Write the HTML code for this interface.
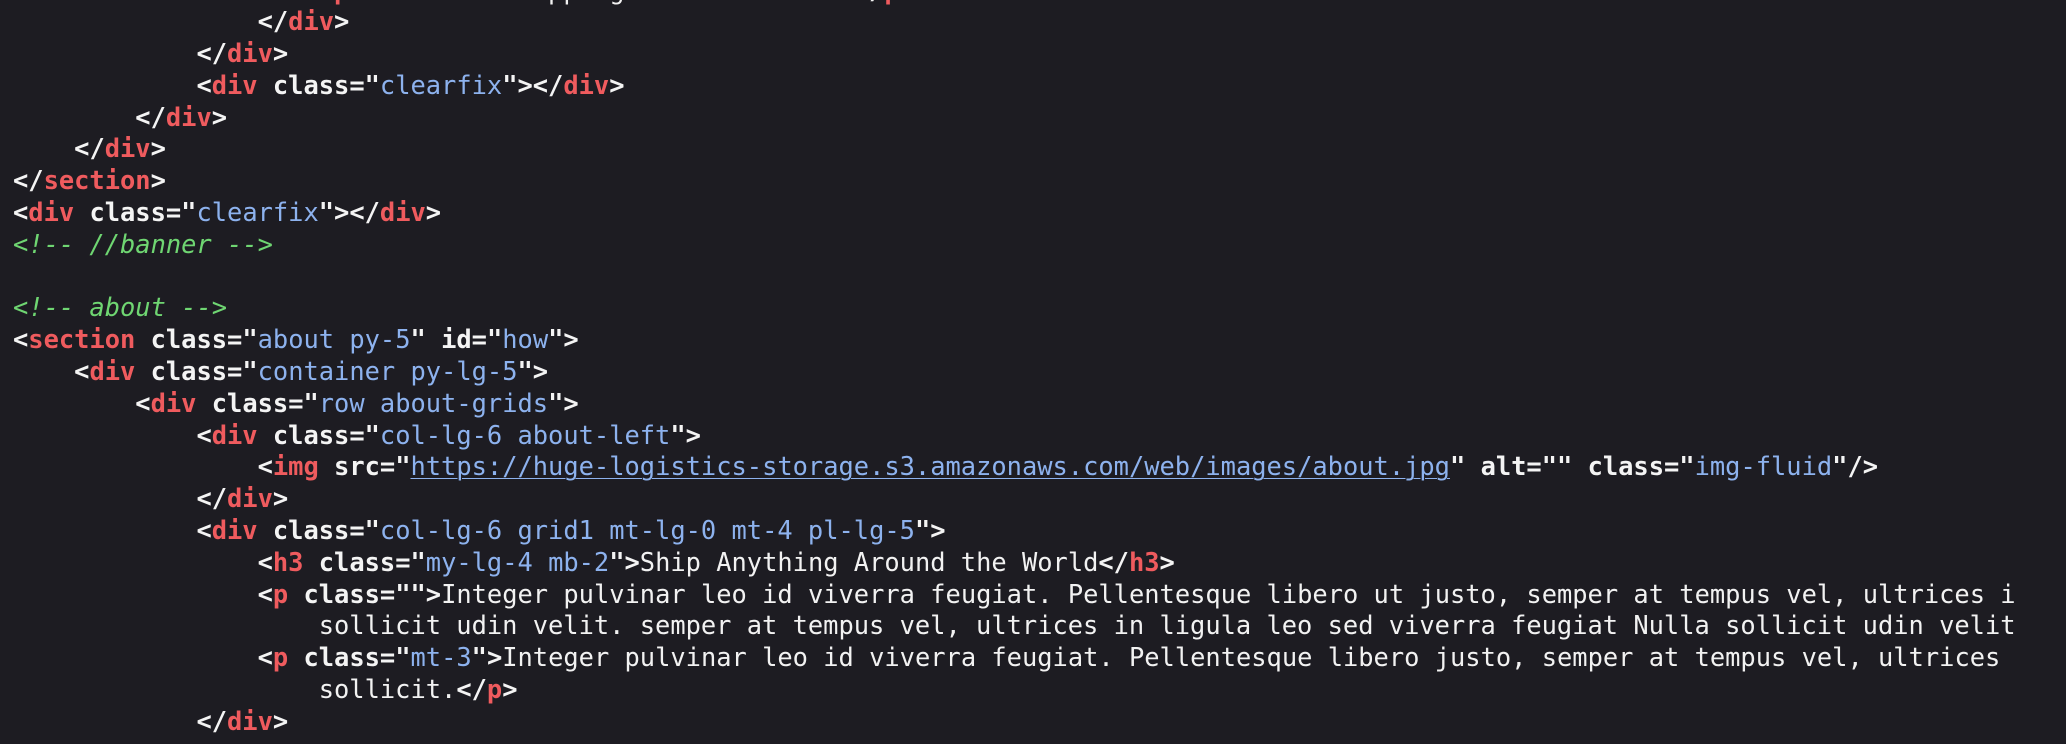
<!DOCTYPE html>
<html><head><meta charset="utf-8">
<style>
html,body{margin:0;padding:0;background:#1d1c22;width:2066px;height:744px;overflow:hidden;}
pre{position:absolute;left:13px;top:-25.5px;width:2053px;overflow:hidden;margin:0;font-family:"DejaVu Sans Mono","Liberation Mono",monospace;font-size:25.4px;line-height:31.8px;color:#f2f2f2;white-space:pre;}
.p{font-weight:bold;color:#f4f4f4}
.t{font-weight:bold;color:#ef5b5e}
.a{font-weight:bold;color:#f4f4f4}
.v{color:#8db2ee}
.u{color:#8db2ee;text-decoration:underline;text-underline-offset:3px;text-decoration-thickness:1px}
.c{color:#6fd672;font-style:italic}
</style></head><body>
<pre>                    <span class="p">&lt;</span><span class="t">p</span><span class="p">&gt;</span>Fast and shipping to all markets<span class="p">&lt;/</span><span class="t">p</span><span class="p">&gt;</span>
                <span class="p">&lt;/</span><span class="t">div</span><span class="p">&gt;</span>
            <span class="p">&lt;/</span><span class="t">div</span><span class="p">&gt;</span>
            <span class="p">&lt;</span><span class="t">div</span> <span class="a">class</span><span class="p">="</span><span class="v">clearfix</span><span class="p">"&gt;&lt;/</span><span class="t">div</span><span class="p">&gt;</span>
        <span class="p">&lt;/</span><span class="t">div</span><span class="p">&gt;</span>
    <span class="p">&lt;/</span><span class="t">div</span><span class="p">&gt;</span>
<span class="p">&lt;/</span><span class="t">section</span><span class="p">&gt;</span>
<span class="p">&lt;</span><span class="t">div</span> <span class="a">class</span><span class="p">="</span><span class="v">clearfix</span><span class="p">"&gt;&lt;/</span><span class="t">div</span><span class="p">&gt;</span>
<span class="c">&lt;!-- //banner --&gt;</span>

<span class="c">&lt;!-- about --&gt;</span>
<span class="p">&lt;</span><span class="t">section</span> <span class="a">class</span><span class="p">="</span><span class="v">about py-5</span><span class="p">"</span> <span class="a">id</span><span class="p">="</span><span class="v">how</span><span class="p">"&gt;</span>
    <span class="p">&lt;</span><span class="t">div</span> <span class="a">class</span><span class="p">="</span><span class="v">container py-lg-5</span><span class="p">"&gt;</span>
        <span class="p">&lt;</span><span class="t">div</span> <span class="a">class</span><span class="p">="</span><span class="v">row about-grids</span><span class="p">"&gt;</span>
            <span class="p">&lt;</span><span class="t">div</span> <span class="a">class</span><span class="p">="</span><span class="v">col-lg-6 about-left</span><span class="p">"&gt;</span>
                <span class="p">&lt;</span><span class="t">img</span> <span class="a">src</span><span class="p">="</span><span class="u">https://huge-logistics-storage.s3.amazonaws.com/web/images/about.jpg</span><span class="p">"</span> <span class="a">alt</span><span class="p">=""</span> <span class="a">class</span><span class="p">="</span><span class="v">img-fluid</span><span class="p">"/&gt;</span>
            <span class="p">&lt;/</span><span class="t">div</span><span class="p">&gt;</span>
            <span class="p">&lt;</span><span class="t">div</span> <span class="a">class</span><span class="p">="</span><span class="v">col-lg-6 grid1 mt-lg-0 mt-4 pl-lg-5</span><span class="p">"&gt;</span>
                <span class="p">&lt;</span><span class="t">h3</span> <span class="a">class</span><span class="p">="</span><span class="v">my-lg-4 mb-2</span><span class="p">"&gt;</span>Ship Anything Around the World<span class="p">&lt;/</span><span class="t">h3</span><span class="p">&gt;</span>
                <span class="p">&lt;</span><span class="t">p</span> <span class="a">class</span><span class="p">=""&gt;</span>Integer pulvinar leo id viverra feugiat. Pellentesque libero ut justo, semper at tempus vel, ultrices i
                    sollicit udin velit. semper at tempus vel, ultrices in ligula leo sed viverra feugiat Nulla sollicit udin velit
                <span class="p">&lt;</span><span class="t">p</span> <span class="a">class</span><span class="p">="</span><span class="v">mt-3</span><span class="p">"&gt;</span>Integer pulvinar leo id viverra feugiat. Pellentesque libero justo, semper at tempus vel, ultrices 
                    sollicit.<span class="p">&lt;/</span><span class="t">p</span><span class="p">&gt;</span>
            <span class="p">&lt;/</span><span class="t">div</span><span class="p">&gt;</span>
</pre>
</body></html>
